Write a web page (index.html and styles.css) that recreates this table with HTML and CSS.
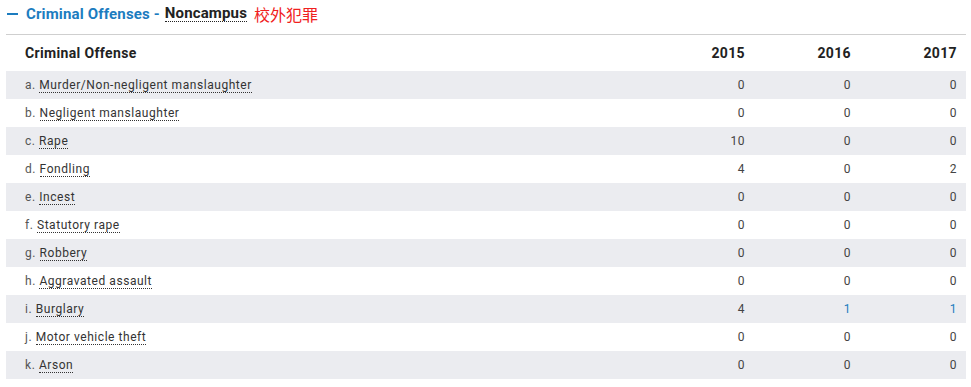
FILE: index.html
```html
<!DOCTYPE html>
<html>
<head>
<meta charset="utf-8">
<link rel="stylesheet" href="styles.css">
</head>
<body>
<div class="section">
  <div class="title">
    <span class="minus"></span>
    <span class="t-blue">Criminal Offenses -</span>
    <span class="t-dark">Noncampus</span>
    <span class="t-red">校外犯罪</span>
  </div>
  <div class="table">
    <div class="row head">
      <div class="c-name">Criminal Offense</div>
      <div class="c-num">2015</div>
      <div class="c-num">2016</div>
      <div class="c-num">2017</div>
    </div>
    <div class="row alt"><div class="c-name"><span class="lbl">a.</span> <span class="lnk">Murder/Non-negligent manslaughter</span></div><div class="c-num">0</div><div class="c-num">0</div><div class="c-num">0</div></div>
    <div class="row"><div class="c-name"><span class="lbl">b.</span> <span class="lnk">Negligent manslaughter</span></div><div class="c-num">0</div><div class="c-num">0</div><div class="c-num">0</div></div>
    <div class="row alt"><div class="c-name"><span class="lbl">c.</span> <span class="lnk">Rape</span></div><div class="c-num">10</div><div class="c-num">0</div><div class="c-num">0</div></div>
    <div class="row"><div class="c-name"><span class="lbl">d.</span> <span class="lnk">Fondling</span></div><div class="c-num">4</div><div class="c-num">0</div><div class="c-num">2</div></div>
    <div class="row alt"><div class="c-name"><span class="lbl">e.</span> <span class="lnk">Incest</span></div><div class="c-num">0</div><div class="c-num">0</div><div class="c-num">0</div></div>
    <div class="row"><div class="c-name"><span class="lbl">f.</span> <span class="lnk">Statutory rape</span></div><div class="c-num">0</div><div class="c-num">0</div><div class="c-num">0</div></div>
    <div class="row alt"><div class="c-name"><span class="lbl">g.</span> <span class="lnk">Robbery</span></div><div class="c-num">0</div><div class="c-num">0</div><div class="c-num">0</div></div>
    <div class="row"><div class="c-name"><span class="lbl">h.</span> <span class="lnk">Aggravated assault</span></div><div class="c-num">0</div><div class="c-num">0</div><div class="c-num">0</div></div>
    <div class="row alt"><div class="c-name"><span class="lbl">i.</span> <span class="lnk">Burglary</span></div><div class="c-num">4</div><div class="c-num blue">1</div><div class="c-num blue">1</div></div>
    <div class="row"><div class="c-name"><span class="lbl">j.</span> <span class="lnk">Motor vehicle theft</span></div><div class="c-num">0</div><div class="c-num">0</div><div class="c-num">0</div></div>
    <div class="row alt"><div class="c-name"><span class="lbl">k.</span> <span class="lnk">Arson</span></div><div class="c-num">0</div><div class="c-num">0</div><div class="c-num">0</div></div>
  </div>
</div>
</body>
</html>
```
FILE: styles.css
```css
* { box-sizing: border-box; }
body {
  margin: 0;
  background: #fff;
  font-family: Roboto, "Liberation Sans", "Noto Sans CJK SC", sans-serif;
  color: #333;
}
.section {
  padding: 0 5px 0 6px;
}
.title {
  display: flex;
  align-items: center;
  height: 35px;
  padding-bottom: 7px;
  border-bottom: 1px solid #cfcfcf;
  font-size: 15px;
  font-weight: bold;
  letter-spacing: 0.15px;
}
.minus {
  display: inline-block;
  width: 11px;
  height: 2px;
  background: #1c7cbf;
  margin: 0 8px 0 1px;
}
.t-blue { color: #1c7cbf; }
.t-dark {
  color: #222;
  margin-left: 5px;
  border-bottom: 1px dotted #222;
  line-height: 16px;
}
.t-red {
  color: #f02020;
  font-weight: normal;
  font-size: 16px;
  margin-left: 7px;
  letter-spacing: 0;
  font-family: "Noto Sans CJK SC", sans-serif;
}
.table {
  display: flex;
  flex-direction: column;
}
.row {
  display: grid;
  grid-template-columns: 1fr 106px 106px 106px;
  height: 28px;
  align-items: center;
  font-size: 12px;
  letter-spacing: 0.55px;
}
.row.alt { background: #ebecf0; }
.row.head {
  height: 36px;
  font-size: 14px;
  font-weight: bold;
  color: #222;
  letter-spacing: 0.35px;
}
.c-name { padding-left: 19px; }
.c-num { text-align: right; padding-right: 9px; color: #444; }
.head .c-num { color: #222; }
.c-num.blue { color: #1c7cbf; }
.lbl { color: #555; }
.lnk {
  color: #333;
  border-bottom: 1px dotted #333;
}
```
